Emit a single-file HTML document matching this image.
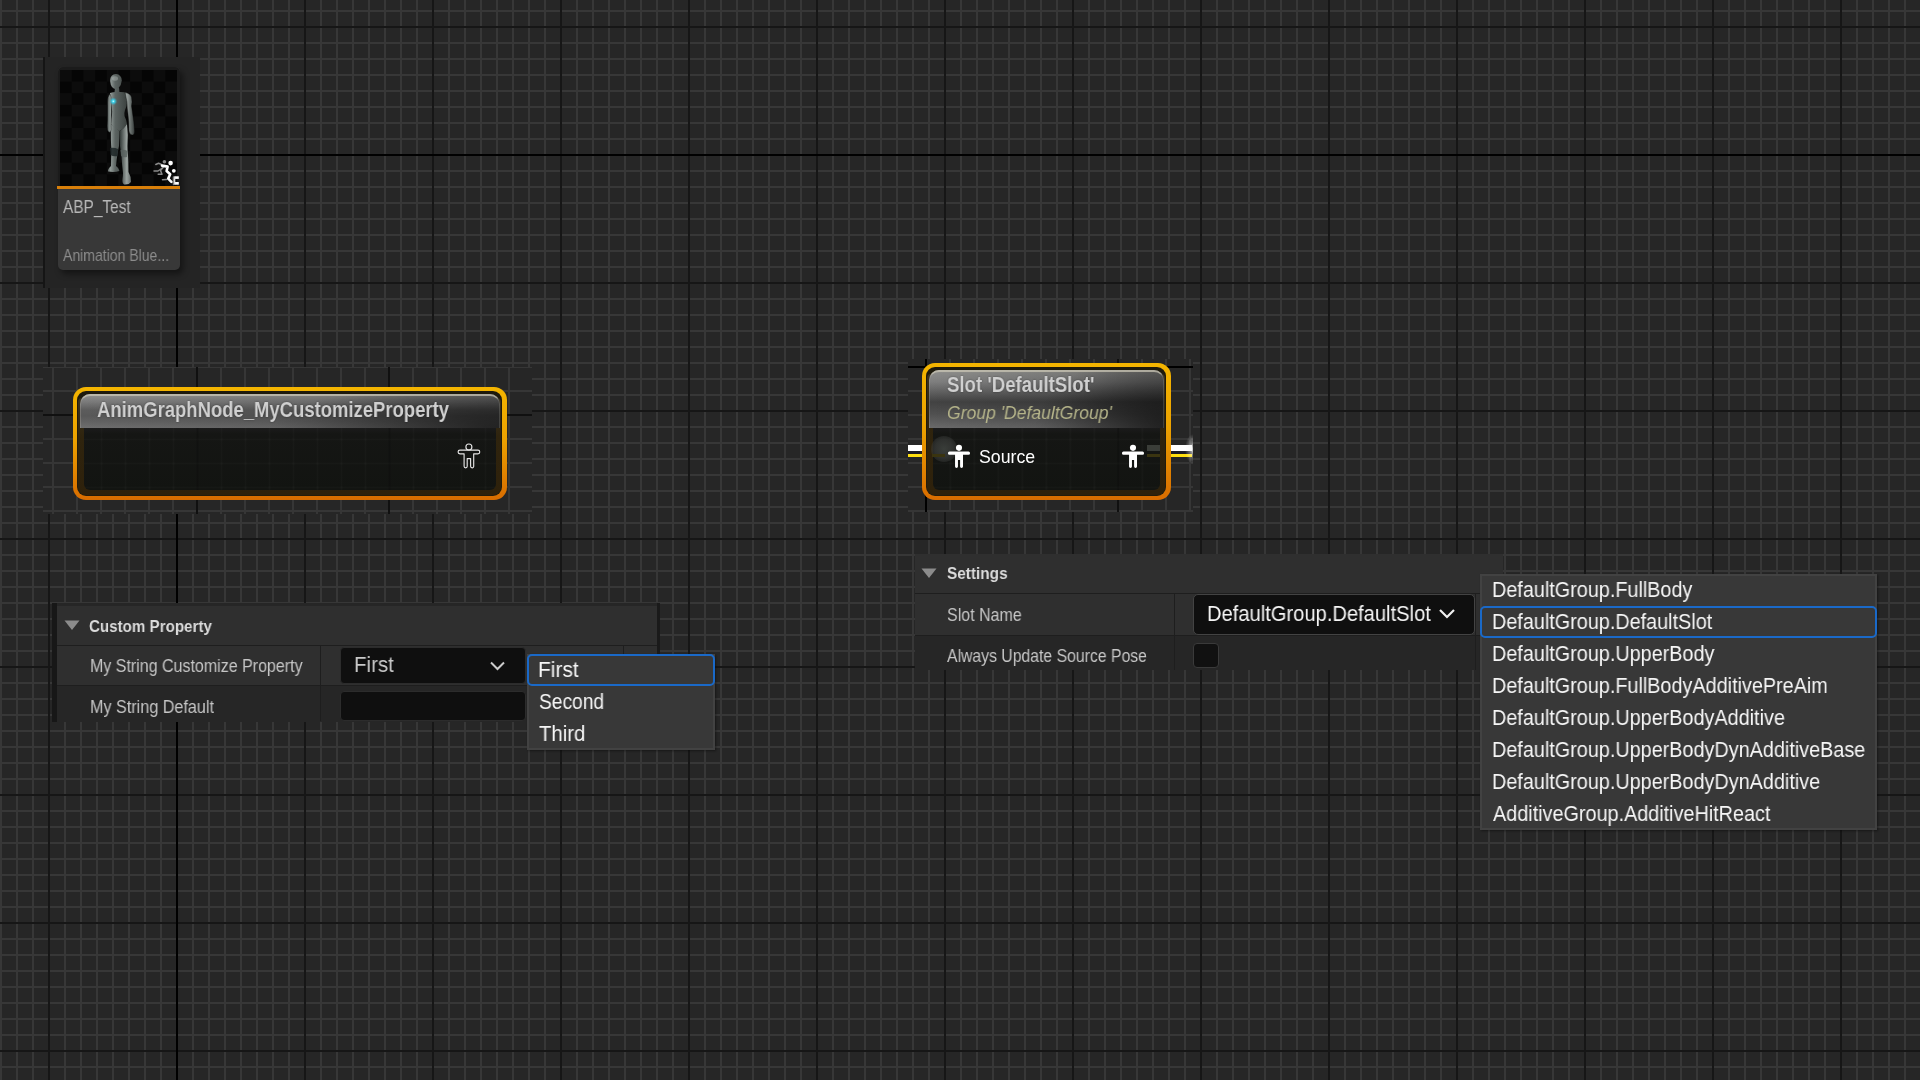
<!DOCTYPE html>
<html><head><meta charset="utf-8">
<style>
*{box-sizing:border-box;margin:0;padding:0}
html,body{width:1920px;height:1080px;overflow:hidden}
body{position:relative;font-family:"Liberation Sans", sans-serif;
background:linear-gradient(90deg,#161616 0 2px,transparent 2px) 48px 0/128px 100%,linear-gradient(180deg,#161616 0 2px,transparent 2px) 0 26px/100% 128px,linear-gradient(90deg,#373737 0 2px,transparent 2px) 0px 0/16px 100%,linear-gradient(180deg,#373737 0 2px,transparent 2px) 0 10px/100% 16px,#262626;
}
.a{position:absolute}
.t{position:absolute;white-space:nowrap;line-height:1;will-change:transform}
</style></head><body>

<div class="a" style="left:176px;top:0;width:2px;height:1080px;background:#000"></div>
<div class="a" style="left:0;top:154px;width:1920px;height:2px;background:#000"></div>
<div class="a" style="left:43px;top:57px;width:157px;height:231px;background:#242424"></div>
<div class="a" style="left:43px;top:57px;width:2px;height:231px;background:#151515"></div>
<div class="a" style="left:58px;top:67px;width:122px;height:203px;border-radius:5px;background:#383838;box-shadow:3px 4px 6px rgba(0,0,0,0.45)"></div>
<div class="a" style="left:58px;top:67px;width:122px;height:122px;border-radius:5px 5px 0 0;background:#1b1b1b"></div>
<div class="a" style="left:60px;top:70px;width:117px;height:116px;background:conic-gradient(#050505 0 25%,#0c0c0c 0 50%,#050505 0 75%,#0c0c0c 0) 0 0/23.4px 23.2px"></div>
<svg class="a" style="left:60px;top:70px" width="117" height="116" viewBox="60 70 117 116">
<defs>
<linearGradient id="mg" x1="105" y1="0" x2="135" y2="0" gradientUnits="userSpaceOnUse">
<stop offset="0" stop-color="#262b2a"/><stop offset="0.18" stop-color="#929b98"/><stop offset="0.34" stop-color="#5c6462"/><stop offset="0.7" stop-color="#3e4442"/><stop offset="1" stop-color="#1e2221"/>
</linearGradient>
<linearGradient id="mg2" x1="120" y1="0" x2="136" y2="0" gradientUnits="userSpaceOnUse">
<stop offset="0" stop-color="#333a38"/><stop offset="0.42" stop-color="#9aa29f"/><stop offset="1" stop-color="#262b2a"/>
</linearGradient>
<radialGradient id="glow"><stop offset="0" stop-color="#e0ffff"/><stop offset="0.3" stop-color="#40d8f0"/><stop offset="1" stop-color="#20b0d0" stop-opacity="0"/></radialGradient>
</defs>
<g fill="url(#mg)">
<path d="M116,74 Q121.5,74.5 121.8,80.5 Q121.5,85 118.5,88 Q115.5,90 113,88 Q110,85 110.2,80 Q110.5,74.5 116,74 Z"/>
<path d="M115,87.5 L119,87.5 L119.5,93 L114.5,93 Z"/>
<path d="M110,93 Q114,91.5 118,92 Q124,91.5 127,93 L127.5,100 Q127,106 125,110 Q124,113 124.5,116 Q126.5,120 127,124 Q124,129 119.5,131 Q114,128.5 111,124 Q111,119 112,115 Q112.5,111 111.5,107 Q110,102 110,93 Z"/>
<path d="M111,124 Q116,128 119.5,131 L119,146 Q118,150 117.5,154 Q116.5,160 116,166 Q119,168 119.5,171 Q114,172.5 108,171.5 Q107.5,169 111,166 Q111,158 111.5,150 Q110.5,140 111,124 Z"/>
<path d="M110,94 Q107.5,96 107.5,102 L107.5,120 Q107,126 107.5,130 Q108.5,133 110.5,132 Q111.5,130 111,126 L111.5,112 Q111.5,103 111,97 Z" stroke="rgba(0,0,0,0.55)" stroke-width="0.6"/>
</g>
<g fill="url(#mg2)">
<path d="M119.5,131 Q124,129 127,124 Q128.5,135 127.5,146 Q127.5,151 128,155 Q128.5,163 128.5,172 Q131,176 131,182 Q129,185 124,184.5 Q122,183 122.5,179 Q123,176 123,173 Q122,165 121.5,156 Q120.5,150 120,146 Z"/>
<path d="M125,92.5 Q130,93 131.5,97 Q132.5,102 131.5,106 L132.5,113 Q134,122 134.5,130 Q135,134.5 132.5,135 Q129.5,135 129,131 Q129,122 128,114 Q127,108 127,102 Z" stroke="rgba(0,0,0,0.55)" stroke-width="0.6"/>
</g>
<ellipse cx="115" cy="78.5" rx="3" ry="2.2" fill="#c8d0cd" opacity="0.35"/>
<path d="M110,148 Q114,147 118,149 L117.5,156 Q113.5,157 110.5,155 Z" fill="#1c2426" opacity="0.85"/>
<path d="M120.5,150 Q124,149 127.5,151 L127,157 Q123.5,158 121,156 Z" fill="#58605e" opacity="0.8"/>
<circle cx="113.3" cy="101.3" r="4" fill="url(#glow)"/>
</svg>
<svg class="a" style="left:150px;top:158px" width="32" height="30" viewBox="150 158 32 30">
<g stroke="#8a8a8a" stroke-width="1.5" fill="none" stroke-linecap="round" stroke-linejoin="round">
<path d="M155.8,164.5 L158.5,163.2 L161,164.2 L163,167.5 L160.5,170.5 L162,174.2 L158.2,174.2"/>
<path d="M163,167.5 L158,171 L154,171"/>
<path d="M162.5,179.8 L166.5,179.5"/>
<path d="M173.5,177 L173.5,184.5"/>
</g>
<circle cx="164.4" cy="161.8" r="1.8" fill="#8a8a8a"/>
<g stroke="#ffffff" stroke-width="2.6" fill="none" stroke-linecap="round" stroke-linejoin="round">
<path d="M162,165.6 L167.6,166.6 L166.6,171 L170.2,174.3 L168.2,178.6 L171.4,181.8"/>
</g>
<circle cx="170.6" cy="163.1" r="2.3" fill="#fff"/>
<circle cx="173.8" cy="170.8" r="1.9" fill="#fff"/>
<rect x="175" y="176.3" width="3.8" height="2.6" fill="#fff"/>
<rect x="175" y="182" width="3.8" height="2.7" fill="#fff"/>
<rect x="174" y="176.3" width="1.3" height="8.4" fill="#dcdcdc"/>
</svg>
<div class="a" style="left:57px;top:186px;width:123px;height:3px;background:#d87f0a"></div>
<div class="t" style="left:62.90px;top:199.00px;font-size:17.44px;font-weight:400;font-style:normal;color:#b8b8b8;transform:scaleX(0.8831);transform-origin:0 0;">ABP_Test</div>
<div class="t" style="left:63.30px;top:248.00px;font-size:15.99px;font-weight:400;font-style:normal;color:#8c8c8c;transform:scaleX(0.8775);transform-origin:0 0;">Animation Blue...</div>
<div class="a" style="left:43px;top:367px;width:489px;height:147px;background-color:#262626;background-image:linear-gradient(90deg,#101010 0 2px,transparent 2px),linear-gradient(90deg,#101010 0 2px,transparent 2px),linear-gradient(180deg,#101010 0 2px,transparent 2px),linear-gradient(90deg,#363636 0 2px,transparent 2px),linear-gradient(180deg,#363636 0 2px,transparent 2px);background-size:2px 100%,2px 100%,100% 2px,24px 100%,100% 24px;background-repeat:no-repeat,no-repeat,no-repeat,repeat,repeat;background-position:153px 0,345px 0,0 47px,9px 0,0 23px"></div>
<div class="a" style="left:72.5px;top:386.5px;width:434.0px;height:113.80000000000001px;border-radius:13px;background:linear-gradient(180deg,#f4b500 0%,#eda300 45%,#d86c00 100%)"></div>
<div class="a" style="left:77.0px;top:391.0px;width:425.0px;height:104.80000000000001px;border-radius:9px;background:linear-gradient(180deg,#1e1a0c,#231c0c)"></div>
<div class="a" style="left:78.0px;top:397.5px;width:423.0px;height:97.30000000000001px;border-radius:4px 4px 8px 8px;background:linear-gradient(180deg,#3a3220 0%,#2f240e 40%,#2e210b 100%)"></div>
<div class="a" style="left:83.5px;top:427.5px;width:412.0px;height:62.80000000000001px;border-radius:0 0 6px 6px;background:linear-gradient(180deg,#1b1b1b 0,#151614 6px,#121411 100%)"></div>
<div class="a" style="left:83.5px;top:427.5px;width:412.0px;height:62.80000000000001px;border-radius:0 0 6px 6px;background:linear-gradient(90deg,rgba(0,0,0,0.3) 0 2px,transparent 2px) 112.5px 0/192px 100%,linear-gradient(90deg,rgba(255,255,255,0.02) 0 2px,transparent 2px) -31.5px 0/24px 100%,linear-gradient(180deg,rgba(255,255,255,0.02) 0 2px,transparent 2px) 0 -37.5px/100% 24px"></div>
<div class="a" style="left:79.5px;top:393.5px;width:420.0px;height:34px;border-radius:10px 10px 0 0;overflow:hidden;background:radial-gradient(ellipse 55% 130% at 100% 100%,rgba(0,0,0,0.55),rgba(0,0,0,0) 100%),linear-gradient(90deg,rgba(0,0,0,0) 0%,rgba(0,0,0,0.12) 55%,rgba(0,0,0,0.3) 100%),linear-gradient(180deg,#9a9890 0,#8a8a88 3px,#7a7a7a 8px,#5c5c5c 16px,#585858 22px,#6e6e6e 34px)"></div>
<div class="a" style="left:79.5px;top:393.5px;width:420.0px;height:34px;border-radius:10px 10px 0 0;border-top:2px solid rgba(200,196,180,0.75);border-left:1px solid rgba(200,196,180,0.25);border-right:1px solid rgba(200,196,180,0.2)"></div>
<div class="t" style="left:97.25px;top:399.00px;font-size:21.8px;font-weight:700;font-style:normal;color:#d0d0d0;transform:scaleX(0.8473);transform-origin:0 0;text-shadow:0 0 2px rgba(0,0,0,0.45)">AnimGraphNode_MyCustomizeProperty</div>
<svg style="position:absolute;left:458px;top:443px;overflow:visible" width="24" height="28" viewBox="0 0 24 28">
<g fill="none" stroke="#e6e6e6" stroke-width="1.15" stroke-linejoin="round"><circle cx="10.9" cy="4.0" r="3.0"/><path d="M1.95,7.1 H19.9 A1.85,1.85 0 0 1 19.9,10.8 H15.7 V23.3 A1.55,1.55 0 0 1 12.6,23.3 V15.6 H9.2 V23.3 A1.55,1.55 0 0 1 6.1,23.3 V10.8 H1.95 A1.85,1.85 0 0 1 1.95,7.1 Z"/></g>
</svg>
<div class="a" style="left:908px;top:359px;width:285px;height:153px;background-color:#262626;background-image:linear-gradient(90deg,#000 0 2px,transparent 2px),linear-gradient(90deg,#101010 0 2px,transparent 2px),linear-gradient(180deg,#000 0 2px,transparent 2px),linear-gradient(90deg,#363636 0 2px,transparent 2px),linear-gradient(180deg,#363636 0 2px,transparent 2px);background-size:2px 100%,2px 100%,100% 2px,24px 100%,100% 24px;background-repeat:no-repeat,no-repeat,no-repeat,repeat,repeat;background-position:17px 0,209px 0,0 7px,17px 0,0 7px"></div>
<div class="a" style="left:908px;top:445px;width:14px;height:6px;background:#ffffff"></div>
<div class="a" style="left:908px;top:451px;width:14px;height:3px;background:#1c1c26"></div>
<div class="a" style="left:908px;top:454px;width:14px;height:3px;background:#ffdf10"></div>
<div class="a" style="left:1170px;top:445px;width:22px;height:6px;background:linear-gradient(90deg,#fff 70%,#f4f4f4 100%)"></div>
<div class="a" style="left:1170px;top:451px;width:22px;height:3px;background:#1c1c26"></div>
<div class="a" style="left:1170px;top:454px;width:22px;height:3px;background:#ffdf10"></div>
<div class="a" style="left:1185px;top:434px;width:8px;height:30px;background:radial-gradient(ellipse 100% 50% at 100% 50%,rgba(255,255,255,0.85),rgba(255,255,255,0.35) 45%,rgba(255,255,255,0) 100%)"></div>
<div class="a" style="left:921.7px;top:362.5px;width:248.89999999999986px;height:137.7px;border-radius:13px;background:linear-gradient(180deg,#f4b500 0%,#eda300 45%,#d86c00 100%)"></div>
<div class="a" style="left:926.2px;top:367.0px;width:239.89999999999986px;height:128.7px;border-radius:9px;background:linear-gradient(180deg,#1e1a0c,#231c0c)"></div>
<div class="a" style="left:927.2px;top:373.5px;width:237.89999999999986px;height:121.19999999999999px;border-radius:4px 4px 8px 8px;background:linear-gradient(180deg,#3a3220 0%,#2f240e 40%,#2e210b 100%)"></div>
<div class="a" style="left:932.7px;top:427.5px;width:226.89999999999986px;height:62.69999999999999px;border-radius:0 0 6px 6px;background:linear-gradient(180deg,#1b1b1b 0,#151614 6px,#121411 100%)"></div>
<div class="a" style="left:932.7px;top:427.5px;width:226.89999999999986px;height:62.69999999999999px;border-radius:0 0 6px 6px;background:linear-gradient(90deg,rgba(0,0,0,0.3) 0 2px,transparent 2px) -7.7000000000000455px 0/192px 100%,linear-gradient(90deg,rgba(255,255,255,0.02) 0 2px,transparent 2px) -7.7000000000000455px 0/24px 100%,linear-gradient(180deg,rgba(255,255,255,0.02) 0 2px,transparent 2px) 0 -61.5px/100% 24px"></div>
<div class="a" style="left:928.7px;top:369.5px;width:234.89999999999986px;height:58px;border-radius:10px 10px 0 0;overflow:hidden;background:radial-gradient(ellipse 55% 130% at 100% 100%,rgba(0,0,0,0.55),rgba(0,0,0,0) 100%),linear-gradient(90deg,rgba(0,0,0,0) 0%,rgba(0,0,0,0.12) 55%,rgba(0,0,0,0.3) 100%),linear-gradient(180deg,#9a9890 0,#8c8c8a 3px,#7e7e7e 12px,#5a5a5a 24px,#424242 32px,#505050 44px,#6a6a6a 58px)"></div>
<div class="a" style="left:928.7px;top:369.5px;width:234.89999999999986px;height:58px;border-radius:10px 10px 0 0;border-top:2px solid rgba(200,196,180,0.75);border-left:1px solid rgba(200,196,180,0.25);border-right:1px solid rgba(200,196,180,0.2)"></div>
<div class="t" style="left:946.90px;top:374.00px;font-size:21.8px;font-weight:700;font-style:normal;color:#d0d0d0;transform:scaleX(0.8535);transform-origin:0 0;text-shadow:0 0 2px rgba(0,0,0,0.45)">Slot 'DefaultSlot'</div>
<div class="t" style="left:946.97px;top:404.00px;font-size:18.9px;font-weight:400;font-style:italic;color:#b5b48a;transform:scaleX(0.9294);transform-origin:0 0;">Group 'DefaultGroup'</div>
<div class="a" style="left:930.5px;top:435.5px;width:26px;height:26px;border-radius:50%;background:radial-gradient(circle,rgba(64,68,64,0.85) 0%,rgba(58,60,58,0.7) 50%,rgba(40,40,40,0) 100%)"></div>
<div class="a" style="left:932px;top:454px;width:13px;height:3px;background:#3a3410"></div>
<div class="a" style="left:1147px;top:445px;width:13px;height:6px;background:#3a3d38"></div>
<div class="a" style="left:1147px;top:454px;width:13px;height:3px;background:#3a3410"></div>
<svg style="position:absolute;left:948.05px;top:444.5px;overflow:visible" width="22" height="26" viewBox="0 0 22 26">
<g fill="#ffffff">
<circle cx="11" cy="2.85" r="3.05"/>
<path d="M1.5,6.6 H20.5 a1.55,1.55 0 0 1 0,3.1 H15.0 V21.5 a1.45,1.45 0 0 1 -2.9,0 V15 H9.95 V21.5 a1.45,1.45 0 0 1 -2.9,0 V9.7 H1.5 a1.55,1.55 0 0 1 0,-3.1 Z"/>
</g></svg>
<svg style="position:absolute;left:1122.05px;top:444.5px;overflow:visible" width="22" height="26" viewBox="0 0 22 26">
<g fill="#ffffff">
<circle cx="11" cy="2.85" r="3.05"/>
<path d="M1.5,6.6 H20.5 a1.55,1.55 0 0 1 0,3.1 H15.0 V21.5 a1.45,1.45 0 0 1 -2.9,0 V15 H9.95 V21.5 a1.45,1.45 0 0 1 -2.9,0 V9.7 H1.5 a1.55,1.55 0 0 1 0,-3.1 Z"/>
</g></svg>
<div class="t" style="left:978.80px;top:448.50px;font-size:17.73px;font-weight:400;font-style:normal;color:#ffffff;transform:scaleX(1.0000);transform-origin:0 0;">Source</div>
<div class="a" style="left:52px;top:603px;width:608px;height:119px;background:#262626"></div>
<div class="a" style="left:57px;top:606px;width:600px;height:39px;background:#2f2f2f"></div>
<div class="a" style="left:57px;top:645px;width:600px;height:1px;background:#1e1e1e"></div>
<div class="a" style="left:57px;top:646px;width:600px;height:39px;background:#2f2f2f"></div>
<div class="a" style="left:57px;top:685px;width:600px;height:1px;background:#1e1e1e"></div>
<div class="a" style="left:57px;top:686px;width:600px;height:35px;background:#262626"></div>
<div class="a" style="left:52px;top:603px;width:5px;height:119px;background:#171717"></div>
<div class="a" style="left:657px;top:603px;width:3px;height:119px;background:#1a1a1a"></div>
<div class="a" style="left:320px;top:646px;width:1px;height:75px;background:#1e1e1e"></div>
<div class="a" style="left:623px;top:646px;width:1px;height:39px;background:#1e1e1e"></div>
<svg class="a" style="left:64px;top:620px" width="16" height="11" viewBox="0 0 16 11"><path d="M0.5,0.5 H15.5 L8,10 Z" fill="#8c8c8c"/></svg>
<div class="t" style="left:89.49px;top:618.50px;font-size:16.72px;font-weight:700;font-style:normal;color:#dcdcdc;transform:scaleX(0.9067);transform-origin:0 0;">Custom Property</div>
<div class="t" style="left:89.88px;top:658.00px;font-size:17.44px;font-weight:400;font-style:normal;color:#c6c6c6;transform:scaleX(0.9177);transform-origin:0 0;">My String Customize Property</div>
<div class="t" style="left:89.77px;top:699.00px;font-size:17.44px;font-weight:400;font-style:normal;color:#c6c6c6;transform:scaleX(0.9271);transform-origin:0 0;">My String Default</div>
<div class="a" style="left:340px;top:647px;width:186px;height:37px;border-radius:4px;background:#0f0f0f;border:1px solid #2c2c2c"></div>
<div class="t" style="left:353.62px;top:654.00px;font-size:21.8px;font-weight:400;font-style:normal;color:#c8c8c8;transform:scaleX(0.9400);transform-origin:0 0;">First</div>
<svg class="a" style="left:488.5px;top:660px" width="17" height="12" viewBox="0 0 17 12"><path d="M2,2.5 L8.5,9 L15,2.5" fill="none" stroke="#cccccc" stroke-width="2"/></svg>
<div class="a" style="left:340px;top:691px;width:186px;height:30px;border-radius:4px;background:#0f0f0f;border:1px solid #2c2c2c"></div>
<div class="a" style="left:527px;top:654px;width:188px;height:96px;background:#383838;border:2px solid #424242;box-shadow:1px 1px 2px rgba(0,0,0,0.4)"></div>
<div class="a" style="left:527px;top:654px;width:188px;height:32px;border:2px solid #1a69c8;border-radius:5px"></div>
<div class="t" style="left:537.88px;top:659.00px;font-size:21.8px;font-weight:400;font-style:normal;color:#f6f6f6;transform:scaleX(0.9600);transform-origin:0 0;">First</div>
<div class="t" style="left:538.92px;top:691.00px;font-size:21.8px;font-weight:400;font-style:normal;color:#f6f6f6;transform:scaleX(0.8806);transform-origin:0 0;">Second</div>
<div class="t" style="left:539.20px;top:723.00px;font-size:21.8px;font-weight:400;font-style:normal;color:#f6f6f6;transform:scaleX(0.9333);transform-origin:0 0;">Third</div>
<div class="a" style="left:915px;top:554px;width:588px;height:39px;background:#2f2f2f"></div>
<div class="a" style="left:915px;top:593px;width:565px;height:1px;background:#1e1e1e"></div>
<div class="a" style="left:915px;top:594px;width:565px;height:41px;background:#2f2f2f"></div>
<div class="a" style="left:915px;top:635px;width:565px;height:1px;background:#1e1e1e"></div>
<div class="a" style="left:915px;top:636px;width:565px;height:34px;background:#262626"></div>
<div class="a" style="left:1174px;top:594px;width:1px;height:76px;background:#1e1e1e"></div>
<div class="a" style="left:1475px;top:594px;width:1px;height:76px;background:#1e1e1e"></div>
<svg class="a" style="left:921px;top:568px" width="16" height="11" viewBox="0 0 16 11"><path d="M0.5,0.5 H15.5 L8,10 Z" fill="#8c8c8c"/></svg>
<div class="t" style="left:946.69px;top:566.30px;font-size:16.86px;font-weight:700;font-style:normal;color:#dcdcdc;transform:scaleX(0.9108);transform-origin:0 0;">Settings</div>
<div class="t" style="left:946.68px;top:607.00px;font-size:17.44px;font-weight:400;font-style:normal;color:#c6c6c6;transform:scaleX(0.9175);transform-origin:0 0;">Slot Name</div>
<div class="t" style="left:947.10px;top:648.00px;font-size:17.44px;font-weight:400;font-style:normal;color:#c6c6c6;transform:scaleX(0.9045);transform-origin:0 0;">Always Update Source Pose</div>
<div class="a" style="left:1193px;top:594px;width:282px;height:41px;border-radius:5px;background:#0f0f0f;border:1px solid #434343"></div>
<div class="t" style="left:1207.45px;top:603.00px;font-size:21.8px;font-weight:400;font-style:normal;color:#f6f6f6;transform:scaleX(0.9238);transform-origin:0 0;">DefaultGroup.DefaultSlot</div>
<svg class="a" style="left:1438px;top:607px" width="18" height="13" viewBox="0 0 18 13"><path d="M2,3 L9,10 L16,3" fill="none" stroke="#f0f0f0" stroke-width="2.2"/></svg>
<div class="a" style="left:1193px;top:643px;width:26px;height:25px;border-radius:4px;background:#111;border:1px solid #3a3a3a"></div>
<div class="a" style="left:1480px;top:574px;width:397px;height:256px;background:#383838;border:2px solid #424242;box-shadow:1px 1px 2px rgba(0,0,0,0.4)"></div>
<div class="a" style="left:1480px;top:606px;width:397px;height:32px;border:2px solid #1a69c8;border-radius:5px"></div>
<div class="t" style="left:1492.38px;top:579.00px;font-size:21.8px;font-weight:400;font-style:normal;color:#f6f6f6;transform:scaleX(0.9088);transform-origin:0 0;">DefaultGroup.FullBody</div>
<div class="t" style="left:1492.38px;top:611.00px;font-size:21.8px;font-weight:400;font-style:normal;color:#f6f6f6;transform:scaleX(0.9088);transform-origin:0 0;">DefaultGroup.DefaultSlot</div>
<div class="t" style="left:1492.38px;top:643.00px;font-size:21.8px;font-weight:400;font-style:normal;color:#f6f6f6;transform:scaleX(0.9088);transform-origin:0 0;">DefaultGroup.UpperBody</div>
<div class="t" style="left:1492.38px;top:675.00px;font-size:21.8px;font-weight:400;font-style:normal;color:#f6f6f6;transform:scaleX(0.9088);transform-origin:0 0;">DefaultGroup.FullBodyAdditivePreAim</div>
<div class="t" style="left:1492.38px;top:707.00px;font-size:21.8px;font-weight:400;font-style:normal;color:#f6f6f6;transform:scaleX(0.9088);transform-origin:0 0;">DefaultGroup.UpperBodyAdditive</div>
<div class="t" style="left:1492.38px;top:739.00px;font-size:21.8px;font-weight:400;font-style:normal;color:#f6f6f6;transform:scaleX(0.9088);transform-origin:0 0;">DefaultGroup.UpperBodyDynAdditiveBase</div>
<div class="t" style="left:1492.38px;top:771.00px;font-size:21.8px;font-weight:400;font-style:normal;color:#f6f6f6;transform:scaleX(0.9088);transform-origin:0 0;">DefaultGroup.UpperBodyDynAdditive</div>
<div class="t" style="left:1492.80px;top:803.00px;font-size:21.8px;font-weight:400;font-style:normal;color:#f6f6f6;transform:scaleX(0.9088);transform-origin:0 0;">AdditiveGroup.AdditiveHitReact</div>
</body></html>
